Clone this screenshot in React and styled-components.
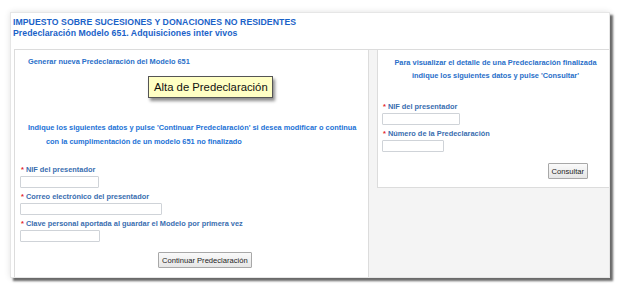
import React from 'react';
import styled, { createGlobalStyle } from 'styled-components';

const GlobalStyle = createGlobalStyle`
  html, body {
    margin: 0;
    padding: 0;
    background: #ffffff;
  }
  body {
    font-family: "Liberation Sans", Arial, sans-serif;
  }
`;

const Page = styled.div`
  padding: 12px 0 0 10px;
  width: 621px;
  height: 289px;
  box-sizing: border-box;
`;

const Frame = styled.div`
  width: 600px;
  height: 266px;
  box-sizing: border-box;
  background: #fff;
  border: 1px solid #e6e6e6;
  box-shadow: 3px 3px 2px #6a6a6a, 0 0 6px rgba(0, 0, 0, 0.12);
  display: flex;
  flex-direction: column;
`;

const Header = styled.div`
  padding: 4px 0 0 2px;
  color: #1a62c8;
  font-weight: bold;
  font-size: 8.7px;
  line-height: 11px;
  letter-spacing: 0.05px;
`;

const Columns = styled.div`
  flex: 1;
  margin: 10px 0 0 3px;
  display: grid;
  grid-template-columns: 354px 1fr;
`;

const LeftCol = styled.div`
  border-top: 1px solid #dcdcdc;
  border-left: 1px solid #dcdcdc;
  background: #fff;
  padding: 7px 0 0 5px;
`;

const RightCol = styled.div`
  border-top: 1px solid #dcdcdc;
  border-left: 1px solid #dcdcdc;
  background: #f4f4f4;
  padding-left: 8px;
`;

const Box = styled.div`
  height: 138px;
  box-sizing: border-box;
  background: #fff;
  border: 1px solid #dcdcdc;
  border-top: none;
  border-right: none;
  padding: 6px 0 0 4px;
`;

const Heading = styled.div`
  color: #2a6fc9;
  font-weight: bold;
  font-size: 7.4px;
  line-height: ${p => p.$lh || 10}px;
  padding-left: ${p => p.$indent || 0}px;
  text-align: ${p => (p.$center ? 'center' : 'left')};
`;

const HeadLine = styled.span`
  display: block;
  padding-left: ${p => p.$indent || 0}px;
`;

const YellowRow = styled.div`
  margin: 9px 0 0 128px;
`;

const YellowButton = styled.button`
  font-family: "Liberation Sans", Arial, sans-serif;
  font-size: 11.3px;
  height: 22px;
  padding: 0 4px 0 5px;
  background: #ffffc4;
  border: 1px solid #555;
  color: #111;
  box-shadow: 2px 3px 3px rgba(0, 0, 0, 0.45);
`;

const Instructions = styled.div`
  margin: 23px 0 0 8px;
  color: #1c72d6;
  font-weight: bold;
  font-size: 7.4px;
  line-height: 14px;
`;

const Fields = styled.div`
  margin-top: ${p => p.$top}px;
  display: flex;
  flex-direction: column;
`;

const Label = styled.label`
  color: #3a6eb0;
  font-weight: bold;
  font-size: 7.4px;
  line-height: 10px;
  padding-left: 1px;
`;

const Star = styled.span`
  color: #e3262b;
  margin-right: 2px;
`;

const Input = styled.input`
  width: ${p => p.$w}px;
  height: 12px;
  box-sizing: border-box;
  border: 1px solid #cfd3d8;
  border-radius: 1px;
  margin: 1px 0 4px;
  padding: 0;
  background: #fff;
`;

const ButtonRow = styled.div`
  display: flex;
  justify-content: ${p => p.$align || 'flex-start'};
  padding-left: ${p => p.$indent || 0}px;
  padding-right: ${p => p.$right || 0}px;
  margin-top: ${p => p.$top}px;
`;

const GrayButton = styled.button`
  font-family: "Liberation Sans", Arial, sans-serif;
  font-size: 7.6px;
  height: 16px;
  padding: 0 3px;
  color: #222;
  background: linear-gradient(#fafafa, #e6e6e6);
  border: 1px solid #a8a8a8;
  border-radius: 1px;
`;

const Field = ({ label, width }) => (
  <>
    <Label>
      <Star>*</Star>
      {label}
    </Label>
    <Input $w={width} />
  </>
);

export default function App() {
  return (
    <Page>
      <GlobalStyle />
      <Frame>
        <Header>
          IMPUESTO SOBRE SUCESIONES Y DONACIONES NO RESIDENTES
          <br />
          Predeclaración Modelo 651. Adquisiciones inter vivos
        </Header>
        <Columns>
          <LeftCol>
            <Heading $indent={8}>Generar nueva Predeclaración del Modelo 651</Heading>
            <YellowRow>
              <YellowButton>Alta de Predeclaración</YellowButton>
            </YellowRow>
            <Instructions>
              <HeadLine>
                Indique los siguientes datos y pulse 'Continuar Predeclaración' si desea modificar o continua
              </HeadLine>
              <HeadLine $indent={18}>
                con la cumplimentación de un modelo 651 no finalizado
              </HeadLine>
            </Instructions>
            <Fields $top={16}>
              <Field label="NIF del presentador" width={79} />
              <Field label="Correo electrónico del presentador" width={142} />
              <Field label="Clave personal aportada al guardar el Modelo por primera vez" width={80} />
            </Fields>
            <ButtonRow $indent={138} $top={6}>
              <GrayButton>Continuar Predeclaración</GrayButton>
            </ButtonRow>
          </LeftCol>
          <RightCol>
            <Box>
              <Heading $center $lh={13}>
                Para visualizar el detalle de una Predeclaración finalizada
                <br />
                indique los siguientes datos y pulse 'Consultar'
              </Heading>
              <Fields $top={20}>
                <Field label="NIF del presentador" width={78} />
                <Field label="Número de la Predeclaración" width={62} />
              </Fields>
              <ButtonRow $align="flex-end" $right={21} $top={7}>
                <GrayButton>Consultar</GrayButton>
              </ButtonRow>
            </Box>
          </RightCol>
        </Columns>
      </Frame>
    </Page>
  );
}
